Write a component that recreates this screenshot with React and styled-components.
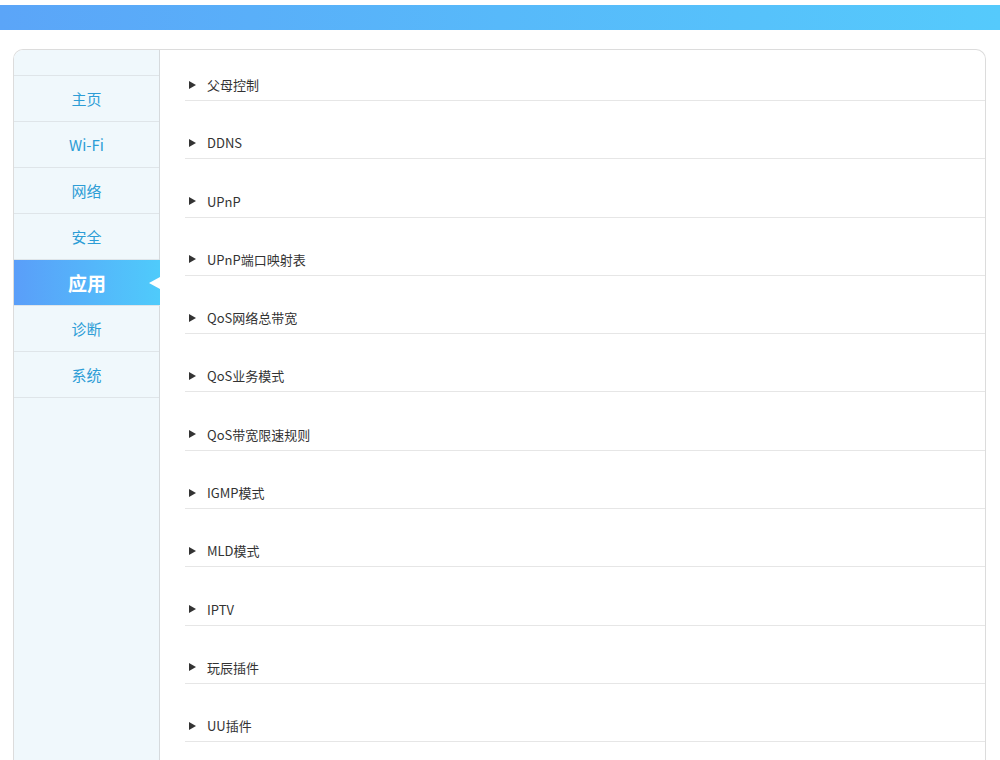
import React from "react";
import styled, { createGlobalStyle } from "styled-components";

const Global = createGlobalStyle`
  html, body { margin: 0; padding: 0; background: #fff; }
  body { font-family: "Noto Sans CJK SC", "Noto Sans", sans-serif; }
`;

const TopBar = styled.div`
  margin-top: 5px;
  height: 25px;
  background: linear-gradient(90deg, #5ba5f8 0%, #57b9fa 50%, #55cafc 100%);
`;

const Card = styled.div`
  margin: 19px 14px 0 13px;
  border: 1px solid #dcdcdc;
  border-bottom: none;
  border-radius: 10px 10px 0 0;
  display: flex;
  min-height: 720px;
  overflow: hidden;
`;

const Sidebar = styled.nav`
  width: 145px;
  flex: none;
  background: #f0f8fc;
  border-right: 1px solid #d6dadd;
  display: flex;
  flex-direction: column;
`;

const SideHead = styled.div`
  height: 25px;
  border-bottom: 1px solid #dfe5e9;
`;

const SideItem = styled.div`
  position: relative;
  height: 45px;
  border-bottom: 1px solid #dfe5e9;
  display: flex;
  align-items: center;
  justify-content: center;
  font-size: ${(p) => (p.$active ? "19px" : "15px")};
  font-weight: ${(p) => (p.$active ? 700 : 400)};
  color: ${(p) => (p.$active ? "#fff" : "#2d9dd6")};
  background: ${(p) =>
    p.$active ? "linear-gradient(90deg, #5a9ef9 0%, #4fcbfb 100%)" : "transparent"};
  margin-right: ${(p) => (p.$active ? "-1px" : "0")};
`;

const Pointer = styled.span`
  position: absolute;
  right: 0;
  top: 50%;
  transform: translateY(-50%);
  width: 0;
  height: 0;
  border-top: 6px solid transparent;
  border-bottom: 6px solid transparent;
  border-right: 11px solid #fff;
`;

const Content = styled.main`
  flex: 1;
  padding-left: 25px;
  display: flex;
  flex-direction: column;
`;

const Row = styled.div`
  height: 50px;
  margin-bottom: 7.3px;
  border-bottom: 1px solid #e6e6e6;
  display: flex;
  align-items: flex-end;
  padding-bottom: 5px;
  box-sizing: content-box;
  height: 45px;
  font-size: 13px;
  color: #333;
`;

const Arrow = styled.span`
  width: 0;
  height: 0;
  margin: 0 11px 0 4px;
  border-top: 4px solid transparent;
  border-bottom: 4px solid transparent;
  border-left: 7px solid #333;
  align-self: center;
  position: relative;
  top: 12px;
`;

const Label = styled.span`
  line-height: 20px;
`;

const nav = ["主页", "Wi-Fi", "网络", "安全", "应用", "诊断", "系统"];
const rows = [
  "父母控制",
  "DDNS",
  "UPnP",
  "UPnP端口映射表",
  "QoS网络总带宽",
  "QoS业务模式",
  "QoS带宽限速规则",
  "IGMP模式",
  "MLD模式",
  "IPTV",
  "玩辰插件",
  "UU插件",
];

export default function App() {
  return (
    <>
      <Global />
      <TopBar />
      <Card>
        <Sidebar>
          <SideHead />
          {nav.map((n) => (
            <SideItem key={n} $active={n === "应用"}>
              {n}
              {n === "应用" && <Pointer />}
            </SideItem>
          ))}
        </Sidebar>
        <Content>
          {rows.map((r) => (
            <Row key={r}>
              <Arrow />
              <Label>{r}</Label>
            </Row>
          ))}
        </Content>
      </Card>
    </>
  );
}
